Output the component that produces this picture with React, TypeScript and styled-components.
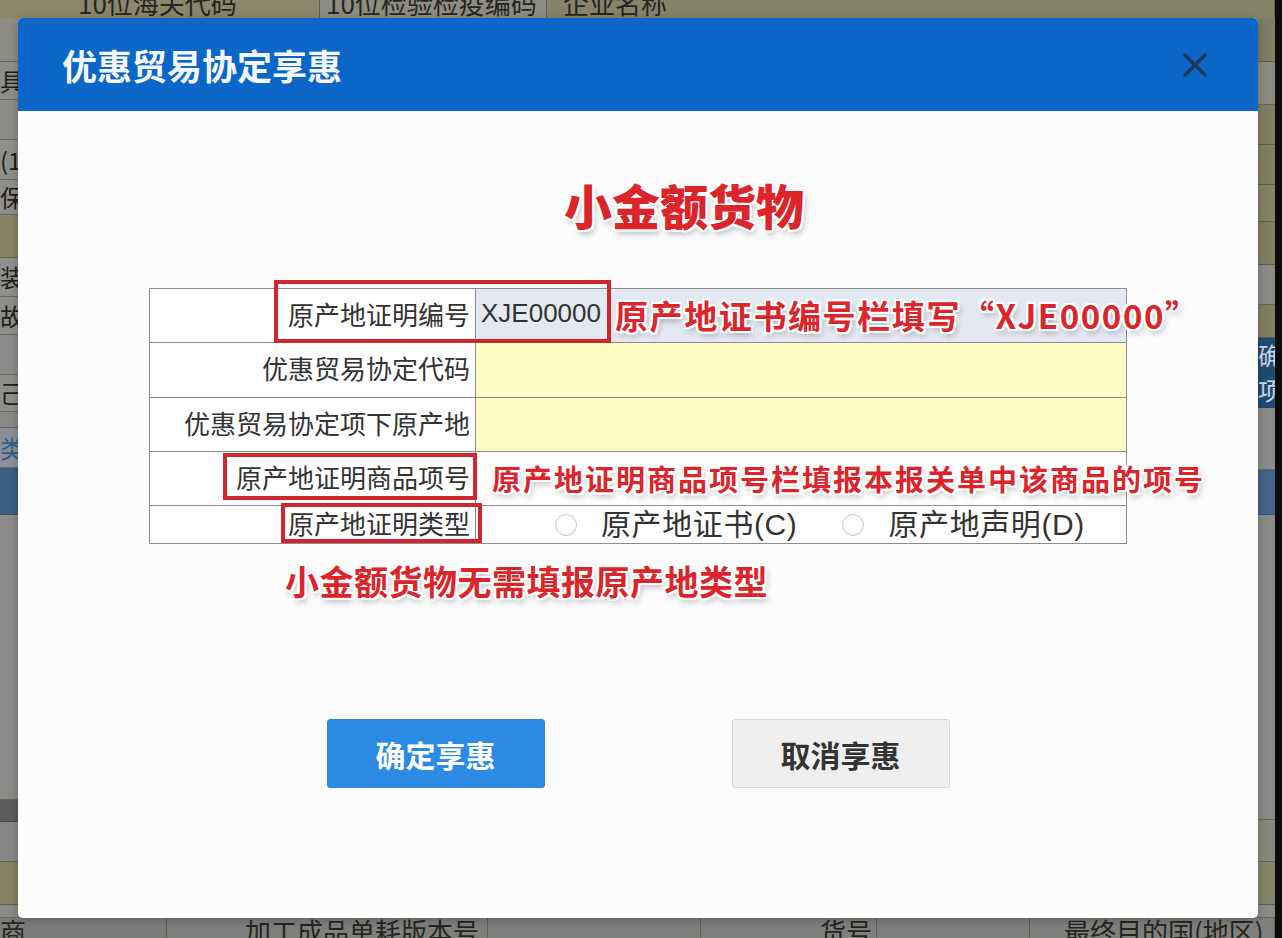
import styled, { createGlobalStyle } from 'styled-components'

type StripItem = { h: number, bg: string, ch?: string, color?: string }

const leftStrip: StripItem[] = [
  { h: 44, bg: '#8d8c84' },
  { h: 38, bg: '#8e8e8a', ch: '具' },
  { h: 40, bg: '#8b8b88' },
  { h: 40, bg: '#8e8e8c', ch: '(1' },
  { h: 35, bg: '#8e8e8c', ch: '保' },
  { h: 43, bg: '#878466' },
  { h: 39, bg: '#8e8e8c', ch: '装' },
  { h: 38, bg: '#8e8e8c', ch: '故' },
  { h: 40, bg: '#8a8a88' },
  { h: 37, bg: '#8e8e8c', ch: '己' },
  { h: 16, bg: '#888886' },
  { h: 40, bg: '#8b9096', ch: '类', color: '#2d5f8c' },
  { h: 47, bg: '#3b5f7f' },
  { h: 285, bg: '#8a8a88' },
  { h: 22, bg: '#5c5c5a' },
  { h: 40, bg: '#878786' },
  { h: 43, bg: '#858263' },
  { h: 13, bg: '#8a8a86' },
]

const rightStrip: StripItem[] = [
  { h: 44, bg: '#7f7e62' },
  { h: 43, bg: '#8a8a82' },
  { h: 40, bg: '#7f7e62' },
  { h: 40, bg: '#7f7e62' },
  { h: 37, bg: '#838266' },
  { h: 43, bg: '#7f7e62' },
  { h: 40, bg: '#8a8a86' },
  { h: 33, bg: '#7f7e62' },
  { h: 34, bg: '#1f4b73', ch: '确', color: '#cfd9e4' },
  { h: 36, bg: '#1f4b73', ch: '项', color: '#cfd9e4' },
  { h: 62, bg: '#8a8a88' },
  { h: 45, bg: '#40648a' },
  { h: 305, bg: '#8a8a88' },
  { h: 42, bg: '#87877f' },
  { h: 43, bg: '#85846c' },
  { h: 13, bg: '#8a8a86' },
]

export default function App(): JSX.Element {
  return (
    <>
      <GlobalStyle />
      <Page>
        <Backdrop>
          <BgRow $h={18} $align='end'>
            <BgCell $w={320} $pad={78} $bg='#8a876b'>10位海关代码</BgCell>
            <BgCell $w={227} $pad={6} $bg='#8e8d84'>10位检验检疫编码</BgCell>
            <BgCell $pad={16} $bg='#85836a'>企业名称</BgCell>
          </BgRow>
          <Middle>
            <Strip $w={18}>
              {leftStrip.map((s, i) => (
                <StripCell key={i} $h={s.h} $bg={s.bg} $color={s.color}>{s.ch}</StripCell>
              ))}
            </Strip>
            <Filler />
            <Strip $w={17}>
              {rightStrip.map((s, i) => (
                <StripCell key={i} $h={s.h} $bg={s.bg} $color={s.color}>{s.ch}</StripCell>
              ))}
            </Strip>
          </Middle>
          <BgRow $h={20} $align='start'>
            <BgCell $w={167} $pad={0} $bg='#7c7c7a'>商</BgCell>
            <BgCell $w={321} $pad={78} $bg='#7f7f7d'>加工成品单耗版本号</BgCell>
            <BgCell $w={213} $pad={0} $bg='#7f7f7d' />
            <BgCell $w={176} $pad={119} $bg='#7f7f7d'>货号</BgCell>
            <BgCell $w={153} $pad={0} $bg='#7f7f7d' />
            <BgCell $pad={34} $bg='#7f7f7d'>最终目的国(地区)</BgCell>
          </BgRow>
        </Backdrop>
        <EdgeShade />

        <Modal>
          <Header>
            <Title>优惠贸易协定享惠</Title>
            <CloseButton aria-label='关闭'>
              <svg width='24' height='24' viewBox='0 0 24 24'>
                <path d='M2 2 L22 22 M22 2 L2 22' stroke='currentColor' strokeWidth='3.5' strokeLinecap='round' />
              </svg>
            </CloseButton>
          </Header>

          <Body>
            <Heading>小金额货物</Heading>

            <TableWrap>
              <FormTable>
                <tbody>
                  <Row $h={54}>
                    <LabelCell>原产地证明编号</LabelCell>
                    <ValueCell $tone='blue'>
                      XJE00000
                      <Note $size={33} $spacing={1.6} $gap={14}>原产地证书编号栏填写“XJE00000”</Note>
                    </ValueCell>
                  </Row>
                  <Row $h={55}>
                    <LabelCell>优惠贸易协定代码</LabelCell>
                    <ValueCell $tone='yellow' />
                  </Row>
                  <Row $h={54}>
                    <LabelCell>优惠贸易协定项下原产地</LabelCell>
                    <ValueCell $tone='yellow' />
                  </Row>
                  <Row $h={54}>
                    <LabelCell>原产地证明商品项号</LabelCell>
                    <ValueCell $tone='plain'>
                      <Note $size={29} $spacing={2} $gap={11}>原产地证明商品项号栏填报本报关单中该商品的项号</Note>
                    </ValueCell>
                  </Row>
                  <Row $h={38}>
                    <LabelCell>原产地证明类型</LabelCell>
                    <ValueCell $tone='plain'>
                      <RadioGroup>
                        <RadioOption>
                          <RadioDot />
                          <RadioText>原产地证书(C)</RadioText>
                        </RadioOption>
                        <RadioOption>
                          <RadioDot />
                          <RadioText>原产地声明(D)</RadioText>
                        </RadioOption>
                      </RadioGroup>
                    </ValueCell>
                  </Row>
                </tbody>
              </FormTable>
              <RedBox $left={125} $top={-8} $w={337} $h={63} />
              <RedBox $left={74} $top={165} $w={254} $h={47} />
              <RedBox $left={132} $top={215} $w={201} $h={40} />
            </TableWrap>

            <Footnote>小金额货物无需填报原产地类型</Footnote>

            <Actions>
              <ActionButton $primary>确定享惠</ActionButton>
              <ActionButton>取消享惠</ActionButton>
            </Actions>
          </Body>
        </Modal>
      </Page>
    </>
  )
}

const GlobalStyle = createGlobalStyle`
  html, body {
    margin: 0;
    padding: 0;
  }
  body {
    width: 1282px;
    height: 938px;
    overflow: hidden;
    font-family: "Noto Sans CJK SC", sans-serif;
  }
`

const Page = styled.div`
  position: relative;
  display: flex;
  width: 1282px;
  height: 938px;
  overflow: hidden;
  background: #0b0b0b;
`

const Backdrop = styled.div`
  flex: 1;
  display: flex;
  flex-direction: column;
  background: #8a8a86;
  overflow: hidden;
`

const EdgeShade = styled.div`
  flex: 0 0 7px;
  background: #0b0b0b;
`

const BgRow = styled.div<{ $h: number, $align: 'start' | 'end' }>`
  display: flex;
  flex: 0 0 ${p => p.$h}px;
  min-height: 0;
  overflow: hidden;
  align-items: ${p => (p.$align === 'end' ? 'flex-end' : 'flex-start')};
`

const BgCell = styled.div<{ $w?: number, $bg: string, $pad: number }>`
  flex: ${p => (p.$w ? `0 0 ${p.$w}px` : '1')};
  align-self: stretch;
  display: flex;
  align-items: inherit;
  padding: 0 0 2px ${p => p.$pad}px;
  box-sizing: border-box;
  background: ${p => p.$bg};
  border-right: 1px solid #5e5e56;
  font-size: 26px;
  line-height: 26px;
  color: #262620;
  white-space: nowrap;
`

const Middle = styled.div`
  flex: 0 0 900px;
  min-height: 0;
  display: flex;
`

const Filler = styled.div`
  flex: 1;
`

const Strip = styled.div<{ $w: number }>`
  flex: 0 0 ${p => p.$w}px;
  display: flex;
  flex-direction: column;
  overflow: hidden;
`

const StripCell = styled.div<{ $h: number, $bg: string, $color?: string }>`
  flex: 0 0 ${p => p.$h}px;
  min-height: 0;
  overflow: hidden;
  box-sizing: border-box;
  display: flex;
  align-items: center;
  background: ${p => p.$bg};
  border-bottom: 1px solid rgba(60, 60, 50, 0.45);
  font-size: 24px;
  line-height: 1;
  color: ${p => p.$color ?? '#1e1e1a'};
  white-space: nowrap;
`

const Modal = styled.div`
  position: absolute;
  top: 18px;
  left: 18px;
  width: 1240px;
  height: 900px;
  display: flex;
  flex-direction: column;
  background: #fcfcfd;
  border-radius: 5px;
  overflow: hidden;
  box-shadow: 0 2px 10px rgba(0, 0, 0, 0.25);
`

const Header = styled.header`
  flex: 0 0 93px;
  display: flex;
  align-items: center;
  justify-content: space-between;
  padding: 0 51px 0 44px;
  background: #0b66c8;
`

const Title = styled.h2`
  margin: 0;
  font-size: 35px;
  font-weight: 700;
  color: #f4f8fc;
`

const CloseButton = styled.button`
  display: flex;
  width: 24px;
  height: 24px;
  padding: 0;
  border: 0;
  background: none;
  color: #1b3658;
`

const Body = styled.div`
  flex: 1;
  display: flex;
  flex-direction: column;
  padding-top: 69px;
`

const redText = `
  font-family: "Noto Sans CJK SC", sans-serif;
  font-weight: 700;
  color: #dc242b;
  white-space: nowrap;
  text-shadow:
    2px 0 0 #fff, -2px 0 0 #fff, 0 2px 0 #fff, 0 -2px 0 #fff,
    2px 2px 0 #fff, -2px -2px 0 #fff, 2px -2px 0 #fff, -2px 2px 0 #fff,
    2px 4px 6px rgba(0, 0, 0, 0.3);
`

const Heading = styled.div`
  ${redText}
  font-size: 48px;
  line-height: 48px;
  font-weight: 900;
  text-align: center;
  padding-left: 92px;
`

const TableWrap = styled.div`
  position: relative;
  width: 978px;
  margin: 60px auto 0;
`

const FormTable = styled.table`
  width: 100%;
  border-collapse: collapse;
  table-layout: fixed;
  font-family: "Liberation Sans", "Noto Sans CJK SC", sans-serif;
  font-size: 26px;
  color: #333;
`

const Row = styled.tr<{ $h: number }>`
  height: ${p => p.$h}px;
`

const LabelCell = styled.td`
  width: 320px;
  padding: 0 5px 0 0;
  border: 1px solid #8c8c8c;
  background: #fefefe;
  text-align: right;
  white-space: nowrap;
  line-height: 1;
`

const ValueCell = styled.td<{ $tone: 'blue' | 'yellow' | 'plain' }>`
  padding: 0 0 0 5px;
  border: 1px solid #8c8c8c;
  background: ${p => (p.$tone === 'blue' ? '#e4e8f0' : p.$tone === 'yellow' ? '#fefdc3' : '#fefefe')};
  white-space: nowrap;
  overflow: visible;
  line-height: 1;
`

const Note = styled.span<{ $size: number, $spacing: number, $gap: number }>`
  ${redText}
  margin-left: ${p => p.$gap}px;
  font-size: ${p => p.$size}px;
  letter-spacing: ${p => p.$spacing}px;
  vertical-align: middle;
`

const RedBox = styled.div<{ $left: number, $top: number, $w: number, $h: number }>`
  position: absolute;
  left: ${p => p.$left}px;
  top: ${p => p.$top}px;
  width: ${p => p.$w}px;
  height: ${p => p.$h}px;
  box-sizing: border-box;
  border: 4px solid #d0262e;
  pointer-events: none;
`

const RadioGroup = styled.div`
  display: flex;
  align-items: center;
  gap: 45px;
  padding-left: 74px;
`

const RadioOption = styled.label`
  display: flex;
  align-items: center;
  gap: 24px;
`

const RadioDot = styled.span`
  flex: 0 0 22px;
  height: 22px;
  box-sizing: border-box;
  border-radius: 50%;
  border: 1px solid #c9c9c9;
  background: radial-gradient(circle at 50% 40%, #ffffff 40%, #eeeeee 100%);
`

const RadioText = styled.span`
  font-size: 30px;
  line-height: 30px;
  letter-spacing: 0.6px;
  color: #333;
`

const Footnote = styled.div`
  ${redText}
  align-self: flex-start;
  margin: 17px 0 0 267px;
  font-size: 34px;
  line-height: 40px;
  letter-spacing: 0.5px;
`

const Actions = styled.div`
  display: flex;
  justify-content: center;
  gap: 187px;
  margin-top: 118px;
`

const ActionButton = styled.button<{ $primary?: boolean }>`
  width: 218px;
  height: 69px;
  border-radius: 3px;
  border: 1px solid ${p => (p.$primary ? '#2a86dd' : '#d9d9d9')};
  background: ${p => (p.$primary ? '#2b8ae3' : '#efefef')};
  color: ${p => (p.$primary ? '#fff' : '#333')};
  font-family: "Noto Sans CJK SC", sans-serif;
  font-size: 30px;
  font-weight: 700;
`
